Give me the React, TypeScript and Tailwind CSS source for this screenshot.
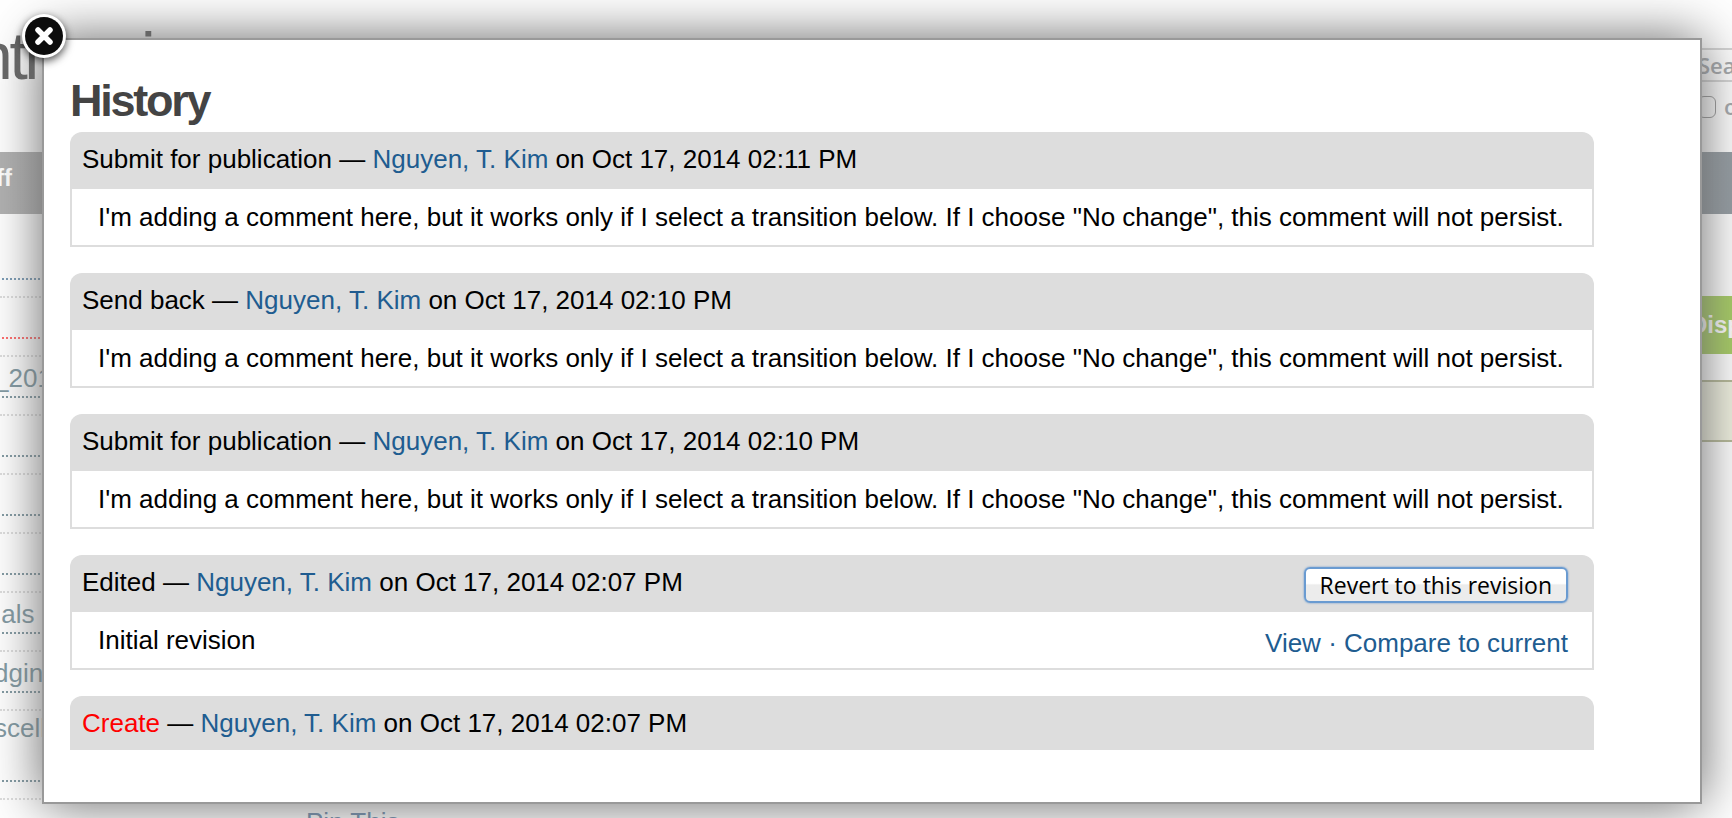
import React from 'react';

type Entry = {
  action: string;
  time: string;
  comment?: string;
  created?: boolean;
  revertable?: boolean;
};

const COMMENT =
  'I\'m adding a comment here, but it works only if I select a transition below. If I choose "No change", this comment will not persist.';

const entries: Entry[] = [
  { action: 'Submit for publication', time: '02:11 PM', comment: COMMENT },
  { action: 'Send back', time: '02:10 PM', comment: COMMENT },
  { action: 'Submit for publication', time: '02:10 PM', comment: COMMENT },
  { action: 'Edited', time: '02:07 PM', comment: 'Initial revision', revertable: true },
  { action: 'Create', time: '02:07 PM', created: true },
];

function HistoryEntry({ entry }: { entry: Entry }) {
  return (
    <article className="text-[26px] leading-7 text-black">
      <header
        className={`flex items-start justify-between rounded-t-xl bg-[#ddd] pl-3 pr-[26px] pt-3 ${
          entry.created ? 'h-[54px]' : 'h-[57px]'
        }`}
      >
        <p className="pt-px">
          <span className={entry.created ? 'text-[#f00]' : ''}>{entry.action}</span> —{' '}
          <a href="#author" className="text-[#205c90]">
            Nguyen, T. Kim
          </a>{' '}
          on Oct 17, 2014 {entry.time}
        </p>
        {entry.revertable && (
          <button
            type="button"
            className="h-9 rounded-md border-2 border-[#6a9bd1] bg-linear-to-b from-white from-45% to-[#ececec] to-50% px-[14px] font-['Open_Sans',sans-serif] text-[23px] leading-8 shadow-[0_0_2px_#5b8fca]"
          >
            Revert to this revision
          </button>
        )}
      </header>
      {entry.comment && (
        <div className="flex h-[58px] justify-between border-2 border-t-0 border-[#ddd] pl-[26px] pr-6 pt-[14px]">
          <p>{entry.comment}</p>
          {entry.revertable && (
            <p className="pt-[3px] text-[#205c90]">
              <a href="#view">View</a> · <a href="#compare">Compare to current</a>
            </p>
          )}
        </div>
      )}
    </article>
  );
}

const rows = [
  { text: '', line: 'border-[#7a9bb5]' },
  { text: '', line: 'border-[#ff6b6b]' },
  { text: '_2014', line: 'border-[#8199a2]' },
  { text: '', line: 'border-[#8199a2]' },
  { text: '', line: 'border-[#8199a2]' },
  { text: '', line: 'border-[#8199a2]' },
  { text: '\u00a0als', line: 'border-[#8199a2]' },
  { text: 'dging', line: 'border-[#8199a2]' },
  { text: 'scellany', line: 'border-[#8199a2]', tall: true },
];

function BackgroundPage() {
  return (
    <div
      aria-hidden="true"
      className="col-start-1 row-start-1 flex h-0 min-h-full min-w-0 flex-col overflow-hidden"
    >
      <div className="flex h-[152px] shrink-0 justify-between">
        <p className="-ml-6 whitespace-nowrap pt-5 text-[66px] leading-[72px] tracking-tighter text-[#666]">
          nti&nbsp;&nbsp;&nbsp;&nbsp;&nbsp;&nbsp;&nbsp;i
        </p>
        <div className="w-[34px] pt-12 font-['Open_Sans',sans-serif] text-[22px] font-semibold text-[#a5a8ab]">
          <div className="flex h-[34px] items-center border-y-2 border-[#d5d5d5]">Sea</div>
          <div className="flex items-center gap-2 pt-2">
            <span className="h-[22px] w-[18px] shrink-0 rounded-md border border-[#999]" />
            <span>only</span>
          </div>
        </div>
      </div>
      <div className="h-[62px] shrink-0 bg-linear-to-r from-[#b0b0b0] to-[#949ca2] pt-3 text-[24px] font-bold leading-7 text-white">
        <p className="-ml-1">ff</p>
      </div>
      <div className="flex shrink-0 justify-between">
        <div className="w-[44px] pt-[25px] text-[26px] leading-7 text-[#8199a2]">
          {rows.map((row, i) => (
            <div
              key={i}
              className={`flex flex-col justify-end border-b-2 border-dotted border-[#ddd] pb-4 ${
                row.tall ? 'h-[89px]' : 'h-[59px]'
              }`}
            >
              <div
                className={`ml-0.5 border-b-2 border-dotted ${row.line} ${
                  row.tall ? 'pb-[38px]' : 'pb-1'
                }`}
              >
                <span className="-ml-2 whitespace-nowrap">{row.text}</span>
              </div>
            </div>
          ))}
        </div>
        <div className="w-[34px] pt-[82px]">
          <div className="flex h-[58px] items-center bg-[#a6cc63] text-[24px] font-bold text-white">
            <span className="-ml-2">Display</span>
          </div>
          <div className="mt-[26px] h-[62px] border-y-2 border-[#b5b896] bg-[#f0f1e0]" />
        </div>
      </div>
      <p className="shrink-0 pl-[306px] pt-2 text-[26px] leading-7 text-[#6f8eae]">Pin This</p>
    </div>
  );
}

export default function App() {
  return (
    <main className="grid min-h-screen grid-cols-1 overflow-hidden bg-white font-['Liberation_Sans',Arial,sans-serif]">
      <BackgroundPage />
      <div className="col-start-1 row-start-1 pb-[14px] pl-[42px] pr-[30px] pt-[38px]">
        <section
          role="dialog"
          aria-labelledby="history-title"
          className="relative border-2 border-[#999] bg-white pb-[52px] pl-[26px] pr-[106px] pt-9 shadow-[0_0_50px_#666]"
        >
          <button
            type="button"
            aria-label="Close"
            className="absolute -left-[26px] -top-[30px] size-[52px] rounded-full"
          >
            <svg viewBox="0 0 52 52" className="size-full drop-shadow-[0_3px_4px_rgba(0,0,0,0.7)]">
              <circle cx="26" cy="26" r="22" fill="#fff" />
              <circle cx="26" cy="26" r="19" fill="#0c0c0c" />
              <path
                d="M20 20 32 32M32 20 20 32"
                stroke="#fff"
                strokeWidth="5.500"
                strokeLinecap="round"
              />
            </svg>
          </button>
          <h1 id="history-title" className="h-14 text-[45px] font-bold leading-[50px] tracking-tighter text-[#444]">
            History
          </h1>
          <div className="flex flex-col gap-[26px]">
            {entries.map((entry, i) => (
              <HistoryEntry key={i} entry={entry} />
            ))}
          </div>
        </section>
      </div>
    </main>
  );
}
